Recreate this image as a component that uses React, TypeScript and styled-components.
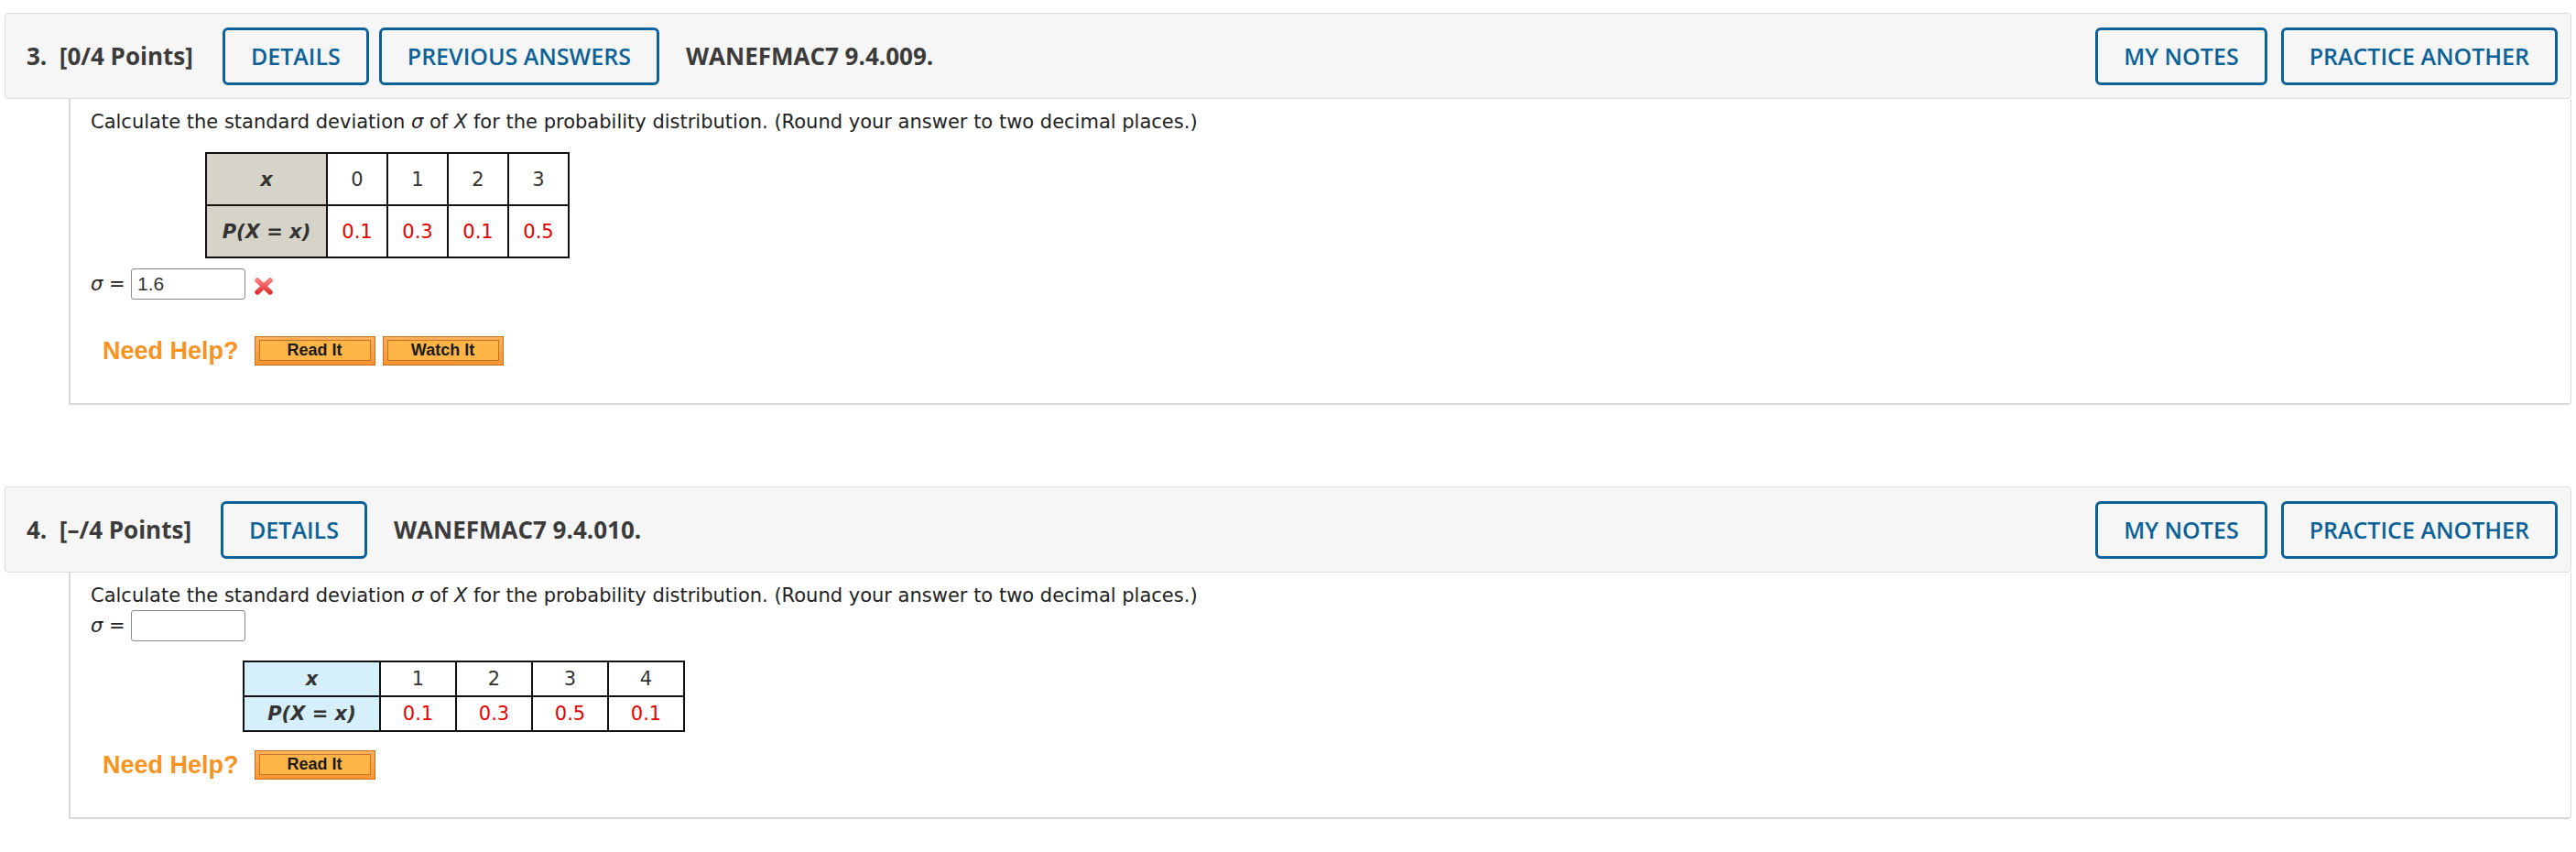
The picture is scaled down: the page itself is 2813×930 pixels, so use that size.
import styled, { createGlobalStyle } from 'styled-components';

const GlobalStyle = createGlobalStyle`
  html, body {
    margin: 0;
    padding: 0;
    background: #ffffff;
  }
  body {
    font-family: "DejaVu Sans", Verdana, sans-serif;
    color: #222;
  }
`;

type Cell = { x: string; p: string };

const firstTable: Cell[] = [
  { x: '0', p: '0.1' },
  { x: '1', p: '0.3' },
  { x: '2', p: '0.1' },
  { x: '3', p: '0.5' },
];

const secondTable: Cell[] = [
  { x: '1', p: '0.1' },
  { x: '2', p: '0.3' },
  { x: '3', p: '0.5' },
  { x: '4', p: '0.1' },
];

const WrongMark = () => (
  <svg width="22" height="21" viewBox="0 0 22 21">
    <defs>
      <linearGradient id="xg" x1="0" y1="0" x2="0" y2="1">
        <stop offset="0" stopColor="#ff7b7b" />
        <stop offset="1" stopColor="#e23535" />
      </linearGradient>
    </defs>
    <path d="M4 4 L18 17 M18 4 L4 17" stroke="url(#xg)" strokeWidth="5.5" strokeLinecap="round" />
  </svg>
);

const App = () => {
  return (
    <>
      <GlobalStyle />
      <Page>
        <Question>
          <QuestionHeader>
            <PointsLabel>3.&nbsp; [0/4 Points]</PointsLabel>
            <HeaderButton>DETAILS</HeaderButton>
            <HeaderButton>PREVIOUS ANSWERS</HeaderButton>
            <QuestionCode>WANEFMAC7 9.4.009.</QuestionCode>
            <HeaderRight>
              <HeaderButton>MY NOTES</HeaderButton>
              <HeaderButton>PRACTICE ANOTHER</HeaderButton>
            </HeaderRight>
          </QuestionHeader>
          <QuestionBody>
            <Prompt>
              Calculate the standard deviation <i>σ</i> of <i>X</i> for the probability distribution. (Round
              your answer to two decimal places.)
            </Prompt>
            <DistTable $indent={125} $gap={19} $headWidth={132} $cellWidth={66} $rowHeight={57} $headBg="#d6d3c9">
              <tbody>
                <tr>
                  <th>x</th>
                  {firstTable.map((c) => (
                    <td key={c.x}>{c.x}</td>
                  ))}
                </tr>
                <tr>
                  <th>P(X = x)</th>
                  {firstTable.map((c) => (
                    <ProbCell key={c.x}>{c.p}</ProbCell>
                  ))}
                </tr>
              </tbody>
            </DistTable>
            <AnswerRow $gap={11}>
              <Sigma>σ =</Sigma>
              <AnswerInput readOnly value="1.6" />
              <MarkSlot>
                <WrongMark />
              </MarkSlot>
            </AnswerRow>
            <HelpRow $gap={40}>
              <NeedHelp>Need Help?</NeedHelp>
              <HelpButton>
                <span>Read It</span>
              </HelpButton>
              <HelpButton>
                <span>Watch It</span>
              </HelpButton>
            </HelpRow>
          </QuestionBody>
        </Question>

        <Question>
          <QuestionHeader>
            <PointsLabel>4.&nbsp; [–/4 Points]</PointsLabel>
            <HeaderButton>DETAILS</HeaderButton>
            <QuestionCode>WANEFMAC7 9.4.010.</QuestionCode>
            <HeaderRight>
              <HeaderButton>MY NOTES</HeaderButton>
              <HeaderButton>PRACTICE ANOTHER</HeaderButton>
            </HeaderRight>
          </QuestionHeader>
          <QuestionBody>
            <Prompt>
              Calculate the standard deviation <i>σ</i> of <i>X</i> for the probability distribution. (Round
              your answer to two decimal places.)
            </Prompt>
            <AnswerRow $gap={2}>
              <Sigma>σ =</Sigma>
              <AnswerInput readOnly value="" />
            </AnswerRow>
            <DistTable $indent={166} $gap={21} $headWidth={149} $cellWidth={83} $rowHeight={38} $headBg="#d5effb">
              <tbody>
                <tr>
                  <th>x</th>
                  {secondTable.map((c) => (
                    <td key={c.x}>{c.x}</td>
                  ))}
                </tr>
                <tr>
                  <th>P(X = x)</th>
                  {secondTable.map((c) => (
                    <ProbCell key={c.x}>{c.p}</ProbCell>
                  ))}
                </tr>
              </tbody>
            </DistTable>
            <HelpRow $gap={20}>
              <NeedHelp>Need Help?</NeedHelp>
              <HelpButton>
                <span>Read It</span>
              </HelpButton>
            </HelpRow>
          </QuestionBody>
        </Question>
      </Page>
    </>
  );
};

export default App;

const Page = styled.div`
  padding: 14px 5px 0 5px;
  display: flex;
  flex-direction: column;
  gap: 89px;
`;

const Question = styled.section`
  display: flex;
  flex-direction: column;
`;

const QuestionHeader = styled.div`
  height: 94px;
  box-sizing: border-box;
  background: #f6f6f6;
  border: 1px solid #dcdcdc;
  border-radius: 4px;
  display: flex;
  align-items: center;
  gap: 11px;
  padding: 0 14px 0 23px;
  font-family: "Open Sans", "Noto Sans", sans-serif;
`;

const PointsLabel = styled.div`
  font-size: 26px;
  font-weight: 700;
  color: #3b3b3b;
  margin-right: 21px;
  white-space: nowrap;
`;

const HeaderButton = styled.button`
  height: 63px;
  box-sizing: border-box;
  padding: 0 28px;
  background: transparent;
  border: 3px solid #0b6298;
  border-radius: 6px;
  color: #0b6298;
  font-family: "Open Sans", "Noto Sans", sans-serif;
  font-size: 25px;
  font-weight: 600;
  white-space: nowrap;
`;

const QuestionCode = styled.div`
  font-size: 26px;
  font-weight: 700;
  color: #3b3b3b;
  margin-left: 18px;
  white-space: nowrap;
`;

const HeaderRight = styled.div`
  margin-left: auto;
  display: flex;
  gap: 15px;
`;

const QuestionBody = styled.div`
  margin-left: 70px;
  border-left: 2px solid #d9d9d9;
  border-right: 1px solid #d9d9d9;
  border-bottom: 2px solid #d9d9d9;
  border-bottom-right-radius: 4px;
  padding: 11px 0 41px 22px;
  display: flex;
  flex-direction: column;
  align-items: flex-start;
`;

const Prompt = styled.div`
  font-size: 21px;
  line-height: 28px;
  color: #222;
  white-space: nowrap;
`;

const DistTable = styled.table<{
  $indent: number;
  $gap: number;
  $headWidth: number;
  $cellWidth: number;
  $rowHeight: number;
  $headBg: string;
}>`
  margin: ${(p) => p.$gap}px 0 0 ${(p) => p.$indent}px;
  border-collapse: collapse;
  font-size: 21px;

  th,
  td {
    border: 2px solid #111;
    height: ${(p) => p.$rowHeight}px;
    padding: 0;
    box-sizing: border-box;
    text-align: center;
    color: #333;
  }

  th {
    width: ${(p) => p.$headWidth}px;
    background: ${(p) => p.$headBg};
    font-style: italic;
    font-weight: 700;
    font-size: 21px;
  }

  td {
    width: ${(p) => p.$cellWidth}px;
    background: #fff;
  }
`;

const ProbCell = styled.td`
  && {
    color: #e60000;
  }
`;

const AnswerRow = styled.div<{ $gap: number }>`
  margin-top: ${(p) => p.$gap}px;
  display: flex;
  align-items: center;
`;

const Sigma = styled.span`
  font-size: 21px;
  font-style: italic;
  width: 44px;
  white-space: nowrap;
`;

const AnswerInput = styled.input`
  width: 125px;
  height: 34px;
  box-sizing: border-box;
  border: 1px solid #8a8a8a;
  border-radius: 3px;
  padding: 0 6px;
  font-family: "Liberation Sans", Arial, sans-serif;
  font-size: 21px;
  color: #333;
  background: #fff;
  outline: none;
`;

const MarkSlot = styled.span`
  display: flex;
  margin-left: 9px;
  margin-top: 4px;
`;

const HelpRow = styled.div<{ $gap: number }>`
  margin-top: ${(p) => p.$gap}px;
  margin-left: 13px;
  display: flex;
  align-items: center;
  gap: 8px;
`;

const NeedHelp = styled.span`
  font-family: "Liberation Sans", Arial, sans-serif;
  font-size: 27px;
  font-weight: 700;
  color: #f7931e;
  margin-right: 9px;
`;

const HelpButton = styled.button`
  width: 132px;
  height: 32px;
  box-sizing: border-box;
  padding: 3px 4px 4px 4px;
  background: linear-gradient(#fbb05a, #f6952f);
  border: 1px solid #c96f1d;
  display: flex;
  align-items: stretch;

  span {
    flex: 1;
    display: flex;
    align-items: center;
    justify-content: center;
    background: #ffb546;
    border: 1px solid #bf7428;
    font-family: "Liberation Sans", Arial, sans-serif;
    font-size: 18px;
    font-weight: 700;
    color: #1a1a1a;
  }
`;
